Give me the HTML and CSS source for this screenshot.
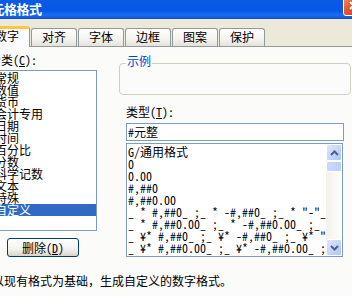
FILE: index.html
```html
<!DOCTYPE html>
<html>
<head>
<meta charset="utf-8">
<title>单元格格式</title>
<link rel="stylesheet" href="styles.css">
</head>
<body>
<div class="dlg">
    <div class="caption">
        <span class="caption-text">单元格格式</span>
        <span class="close">
            <svg width="13" height="13" viewBox="0 0 13 13"><path d="M3 3 L10 10 M10 3 L3 10" stroke="#fff" stroke-width="2" fill="none"/></svg>
        </span>
    </div>
    <div class="tabs">
        <div class="tab active">数字</div>
        <div class="tab">对齐</div>
        <div class="tab">字体</div>
        <div class="tab">边框</div>
        <div class="tab">图案</div>
        <div class="tab">保护</div>
    </div>
    <div class="page">
        <div class="cols">
            <div class="left">
                <div class="lbl">分类(<u>C</u>):</div>
                <ul class="cats">
                    <li>常规</li>
                    <li>数值</li>
                    <li>货币</li>
                    <li>会计专用</li>
                    <li>日期</li>
                    <li>时间</li>
                    <li>百分比</li>
                    <li>分数</li>
                    <li>科学记数</li>
                    <li>文本</li>
                    <li>特殊</li>
                    <li class="sel">自定义</li>
                </ul>
                <button class="btn">删除(<u>D</u>)</button>
            </div>
            <div class="right">
                <div class="sample">
                    <span class="sample-title">示例</span>
                </div>
                <div class="lbl type-lbl">类型(<u>T</u>):</div>
                <div class="input">#元整</div>
                <div class="fmts">
                    <ul>
                        <li>G/通用格式</li>
                        <li>0</li>
                        <li>0.00</li>
                        <li>#,##0</li>
                        <li>#,##0.00</li>
                        <li>_ * #,##0_ ;_ * -#,##0_ ;_ * "-"_ ;_ @_ </li>
                        <li>_ * #,##0.00_ ;_ * -#,##0.00_ ;_ * "-"??_ ;_ @_ </li>
                        <li>_ ¥* #,##0_ ;_ ¥* -#,##0_ ;_ ¥* "-"_ ;_ @_ </li>
                        <li>_ ¥* #,##0.00_ ;_ ¥* -#,##0.00_ ;_ ¥* "-"??_ ;_ @_ </li>
                    </ul>
                    <div class="sb">
                        <div class="sb-btn">
                            <svg width="9" height="6" viewBox="0 0 9 6"><path d="M1 5 L4.5 1.5 L8 5" stroke="#4d6185" stroke-width="2" fill="none"/></svg>
                        </div>
                        <div class="sb-thumb"></div>
                        <div class="sb-track"></div>
                        <div class="sb-btn">
                            <svg width="9" height="6" viewBox="0 0 9 6"><path d="M1 1 L4.5 4.5 L8 1" stroke="#4d6185" stroke-width="2" fill="none"/></svg>
                        </div>
                    </div>
                </div>
            </div>
        </div>
        <p class="hint">以现有格式为基础，生成自定义的数字格式。</p>
    </div>
</div>
</body>
</html>
```

FILE: styles.css
```css
html, body{
    margin: 0;
    padding: 0;
}
body{
    width: 352px;
    height: 296px;
    overflow: hidden;
    background: #fbfbfa;
    font-family: "Noto Sans Mono CJK SC", "Noto Sans CJK SC", sans-serif;
    font-size: 12px;
    line-height: 12px;
    color: #000;
}
ul{
    margin: 0;
    padding: 0;
    list-style: none;
}
.dlg{
    margin-left: -20px;
    width: 384px;
}
.caption{
    height: 19px;
    display: flex;
    align-items: flex-start;
    background: linear-gradient(#0a5ae4 0%, #0558e6 55%, #1a6cf0 80%, #0b4fd6 100%);
    color: #fff;
    font-family: "Noto Sans CJK SC", sans-serif;
    font-weight: bold;
    font-size: 13px;
    line-height: 17px;
}
.caption-text{
    margin-left: -1px;
    letter-spacing: -0.5px;
}
.close{
    margin-left: auto;
    margin-top: -5px;
    width: 21px;
    height: 21px;
    box-sizing: border-box;
    border: 1px solid #fff;
    border-radius: 3px;
    background: linear-gradient(135deg, #f09a7c, #e2592f 40%, #c7411d);
    display: flex;
    align-items: center;
    justify-content: center;
}
.tabs{
    height: 27px;
    background: #ece9d8;
    display: flex;
    align-items: flex-end;
    gap: 1px;
    padding-left: 4px;
}
.tab{
    width: 46px;
    height: 18px;
    box-sizing: border-box;
    border: 1px solid #919b9c;
    border-bottom: 0;
    border-radius: 3px 3px 0 0;
    background: linear-gradient(#fefefe, #f4f3ee 60%, #e4e2da);
    text-align: center;
    line-height: 16px;
}
.tab.active{
    height: 21px;
    margin-bottom: -1px;
    border-top: 3px solid #ffc83c;
    background: #fcfcfe;
    line-height: 13px;
    position: relative;
}
.page{
    border-top: 1px solid #919b9c;
    height: 250px;
    background: #fbfbfa;
}
.cols{
    display: flex;
    padding-left: 9px;
}
.left{
    width: 107px;
    padding-top: 7px;
}
.lbl{
    height: 12px;
}
.cats{
    margin: 4px 0 0 3px;
    width: 105px;
    height: 161px;
    box-sizing: border-box;
    border: 1px solid #7f9db9;
    background: #fff;
    padding: 1px 0 0 2px;
}
.cats li{
    height: 12px;
    white-space: nowrap;
}
.cats .sel{
    margin-left: -2px;
    padding-left: 2px;
    background: #316ac5;
    color: #fff;
}
.btn{
    display: block;
    margin: 7px 0 0 18px;
    width: 72px;
    height: 19px;
    box-sizing: border-box;
    border: 1px solid #003c74;
    border-radius: 3px;
    background: linear-gradient(#fff, #f3f2ee 60%, #d8d4c8);
    font-family: inherit;
    font-size: 12px;
    line-height: 12px;
    padding: 0;
    color: #000;
}
.right{
    margin-left: 23px;
    width: 232px;
    padding-top: 16px;
}
.sample{
    height: 32px;
    box-sizing: border-box;
    border: 1px solid #d0d0bf;
    border-radius: 4px;
}
.sample-title{
    display: block;
    width: max-content;
    margin: -9px 0 0 6px;
    padding: 0 1px;
    background: #fbfbfa;
    color: #0046d5;
    line-height: 12px;
}
.type-lbl{
    margin: 11px 0 0 7px;
}
.input{
    margin: 5px 0 0 7px;
    width: 218px;
    height: 18px;
    box-sizing: border-box;
    border: 1px solid #7f9db9;
    background: #fff;
    padding-left: 1px;
    line-height: 16px;
}
.fmts{
    margin: 2px 0 0 7px;
    width: 217px;
    height: 114px;
    box-sizing: border-box;
    border: 1px solid #7f9db9;
    background: #fff;
    display: flex;
}
.fmts ul{
    flex: 1;
    min-width: 0;
    overflow: hidden;
    padding: 2px 0 0 1px;
}
.fmts li{
    height: 12px;
    white-space: pre;
}
.sb{
    width: 16px;
    display: flex;
    flex-direction: column;
    background: linear-gradient(90deg, #f3f1ec, #fefefb);
}
.sb-btn{
    height: 17px;
    box-sizing: border-box;
    border: 1px solid #fff;
    border-radius: 2px;
    background: linear-gradient(135deg, #dde6fd, #c1d3fb 60%, #b0c5f4);
    display: flex;
    align-items: center;
    justify-content: center;
}
.sb-thumb{
    height: 11px;
    box-sizing: border-box;
    border: 1px solid #fff;
    border-radius: 2px;
    background: linear-gradient(90deg, #c9d8fc, #bcd0fa);
}
.sb-track{
    flex: 1;
}
.hint{
    margin: 18px 0 0 12px;
    line-height: 12px;
    white-space: nowrap;
}
```
